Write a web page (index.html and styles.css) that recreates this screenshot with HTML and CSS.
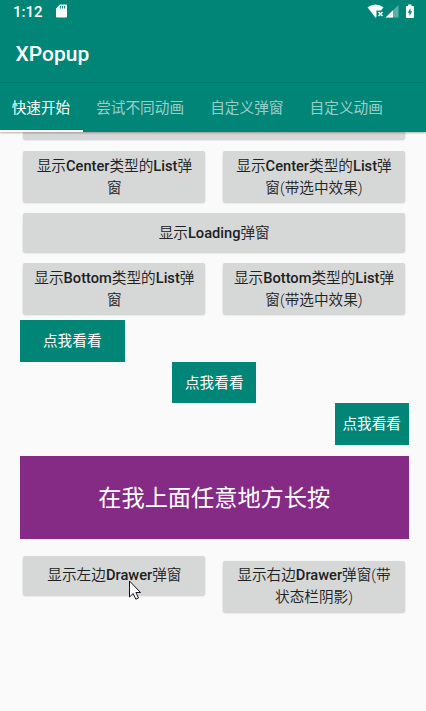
FILE: index.html
```
<!DOCTYPE html>
<html lang="zh-CN">
<head>
<meta charset="utf-8">
<title>XPopup</title>
<link rel="stylesheet" href="styles.css">
</head>
<body>
<header class="header">
  <div class="status">
    <span class="time">1:12</span>
    <svg class="sd" width="11" height="14" viewBox="0 0 11 14"><path fill="#fff" fill-rule="evenodd" d="M4 .5h6q1 0 1 1v11q0 1-1 1H1q-1 0-1-1V4.500zM4 2v2.500h1V2zM6 2v2.500h1V2zM8 2v2.500h1V2z"/></svg>
    <svg class="signals" width="48" height="15" viewBox="0 0 48 15">
      <path fill="#fff" d="M.5 3.200Q8.500-2.200 16.500 3.200L14 6.500H9.500V12.800L8.500 13.800z"/>
      <path stroke="#fff" stroke-width="1.500" d="M11.500 8l4 4M15.500 8l-4 4"/>
      <path fill="#fff" opacity=".35" d="M31.500 1v12.500H18.500z"/>
      <path fill="#fff" d="M26 6.300V13.500h-7.500z"/>
      <path fill="#fff" fill-rule="evenodd" d="M41 .500h3.500V2H46q1 0 1 1v10q0 1-1 1h-6q-1 0-1-1V3q0-1 1-1h1zM43.500 4L40.800 8.700h1.700V12l2.700-4.700h-1.700z"/>
    </svg>
  </div>
  <h1 class="title">XPopup</h1>
  <nav class="tabs">
    <a class="tab active">快速开始</a><a class="tab">尝试不同动画</a><a class="tab">自定义弹窗</a><a class="tab">自定义动画</a>
  </nav>
</header>
<main class="content">
  <div class="btn stub"></div>
  <div class="row">
    <div class="btn two"><p>显示<b>Center</b>类型的<b>List</b>弹<br>窗</p></div>
    <div class="btn two"><p>显示<b>Center</b>类型的<b>List</b>弹<br>窗(带选中效果)</p></div>
  </div>
  <div class="btn one loading"><p>显示<b>Loading</b>弹窗</p></div>
  <div class="row">
    <div class="btn two"><p>显示<b>Bottom</b>类型的<b>List</b>弹<br>窗</p></div>
    <div class="btn two"><p>显示<b>Bottom</b>类型的<b>List</b>弹<br>窗(带选中效果)</p></div>
  </div>
  <div class="chips">
    <div class="chip start">点我看看</div>
    <div class="chip middle">点我看看</div>
    <div class="chip end">点我看看</div>
  </div>
  <div class="press">在我上面任意地方长按</div>
  <div class="row drawers">
    <div class="btn one"><p>显示左边<b>Drawer</b>弹窗</p></div>
    <div class="btn two lower"><p>显示右边<b>Drawer</b>弹窗(带<br>状态栏阴影)</p></div>
  </div>
</main>
<svg class="cursor" width="14" height="21" viewBox="0 0 14 21"><path fill="#fff" stroke="#15151f" d="M1.500 1v16l3.700-3.500 2.600 5.700 2.700-1.200-2.600-5.500h4.600z"/></svg>
</body>
</html>
```
FILE: styles.css
```
* { box-sizing: border-box; }
body {
  margin: 0;
  width: 426px;
  height: 711px;
  overflow: hidden;
  background: #fafafa;
  color: #202121;
  font: 400 14.650px/22px Roboto, "Noto Sans CJK SC", sans-serif;
}
p { margin: 0; }
b { font-weight: 500; }
.header {
  position: relative;
  height: 132px;
  background: #008577;
  color: #fff;
  box-shadow: 0 1px 2px rgba(0, 0, 0, .3);
}
.status {
  display: flex;
  height: 24px;
  padding: 4px 11px 0 13px;
}
.time { width: 43px; font-size: 15px; font-weight: 500; line-height: 17px; }
.signals { margin-left: auto; }
.title {
  height: 59px;
  margin: 0;
  padding-left: 15.500px;
  font-size: 21px;
  font-weight: 500;
  line-height: 60px;
  border-bottom: 1px solid #007b6e;
}
.tabs { display: flex; height: 49px; }
.tab {
  padding: 0 13px 0 13.200px;
  line-height: 50px;
  color: rgba(255, 255, 255, .62);
  white-space: nowrap;
}
.tab.active {
  width: 83px;
  padding: 0 0 0 11.700px;
  color: #fff;
  border-bottom: 2px solid #fff;
}
.content { padding: 0 17.500px 0 20px; }
.btn {
  display: flex;
  align-items: center;
  justify-content: center;
  text-align: center;
  font-weight: 350;
  background: #d6d7d7;
  border-radius: 2px;
  box-shadow: 0 1px 2px rgba(0, 0, 0, .2);
}
.stub { height: 7px; margin: 0 3.500px 12px 3.400px; border-radius: 0 0 2px 2px; }
.row {
  display: grid;
  grid-template-columns: 182px 182px;
  justify-content: space-between;
  align-items: start;
  margin: 0 3.500px 0 3.400px;
}
.two { height: 51px; }
.one { height: 39px; }
.loading { margin: 11px 3.500px 11px 3.400px; }
.chips { display: flex; flex-direction: column; margin-top: 6px; }
.chip {
  height: 41.700px;
  line-height: 42px;
  text-align: center;
  background: #008577;
  color: #fff;
}
.start { width: 104.500px; }
.middle { width: 84px; align-self: center; }
.end { width: 73.700px; align-self: flex-end; }
.press {
  height: 83.200px;
  margin-top: 11px;
  background: #852b85;
  color: #fff;
  font-size: 23.200px;
  line-height: 85px;
  text-align: center;
}
.drawers { margin-top: 16.700px; }
.lower { margin-top: 5px; }
.cursor { position: absolute; left: 128px; top: 580px; }
```
